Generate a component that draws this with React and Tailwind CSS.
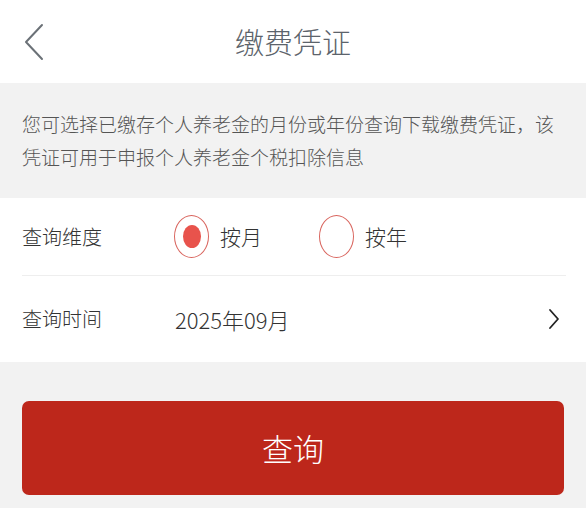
import { useState } from "react";

const font = { fontFamily: '"Noto Sans CJK SC", "Noto Sans", sans-serif' };

function Radio({ checked, label, onClick }) {
  return (
    <button onClick={onClick} className="flex items-center gap-[11px]">
      <span className="w-[35px] h-[43px] rounded-[50%] border-[1.5px] border-[#d9665f] flex items-center justify-center">
        {checked && <span className="w-[18px] h-[23px] rounded-[50%] bg-[#e8534c]" />}
      </span>
      <span className="text-[21px] text-[#333]">{label}</span>
    </button>
  );
}

export default function App() {
  const [mode, setMode] = useState("month");

  return (
    <div className="w-[586px] h-[508px] bg-[#f2f2f2] overflow-hidden font-light" style={font}>
      {/* header */}
      <div className="h-[83px] bg-white flex items-center relative">
        <button className="pl-[22px] pt-[1px]">
          <svg width="24" height="38" viewBox="0 0 24 38" fill="none">
            <path d="M20 2 L4 19 L20 36" stroke="#6b7177" strokeWidth="2" strokeLinecap="round" strokeLinejoin="round" />
          </svg>
        </button>
        <h1 className="absolute inset-x-0 text-center text-[29px] text-[#5c636b] pointer-events-none">
          缴费凭证
        </h1>
      </div>

      {/* info */}
      <div className="h-[115px] px-[22px] pt-[24px] text-[19px] leading-[33px] text-[#555]">
        您可选择已缴存个人养老金的月份或年份查询下载缴费凭证，该凭证可用于申报个人养老金个税扣除信息
      </div>

      {/* form */}
      <div className="bg-white pl-[22px] pr-[20px]">
        <div className="h-[78px] flex items-center border-b border-[#eeeeee]">
          <span className="w-[152px] text-[20px] text-[#333]">查询维度</span>
          <div className="flex items-center gap-[57px]">
            <Radio checked={mode === "month"} label="按月" onClick={() => setMode("month")} />
            <Radio checked={mode === "year"} label="按年" onClick={() => setMode("year")} />
          </div>
        </div>
        <div className="h-[86px] flex items-center">
          <span className="w-[153px] text-[20px] text-[#333]">查询时间</span>
          <span className="flex-1 text-[22px] text-[#333]">2025年09月</span>
          <svg width="12" height="22" viewBox="0 0 12 22" fill="none" className="mr-[6px]">
            <path d="M2 2 L10 11 L2 20" stroke="#222" strokeWidth="1.8" strokeLinecap="round" strokeLinejoin="round" />
          </svg>
        </div>
      </div>

      {/* button */}
      <div className="px-[22px] pt-[39px]">
        <button className="w-full h-[94px] rounded-[7px] bg-[#bd271b] text-white text-[31px]">
          查询
        </button>
      </div>
    </div>
  );
}
